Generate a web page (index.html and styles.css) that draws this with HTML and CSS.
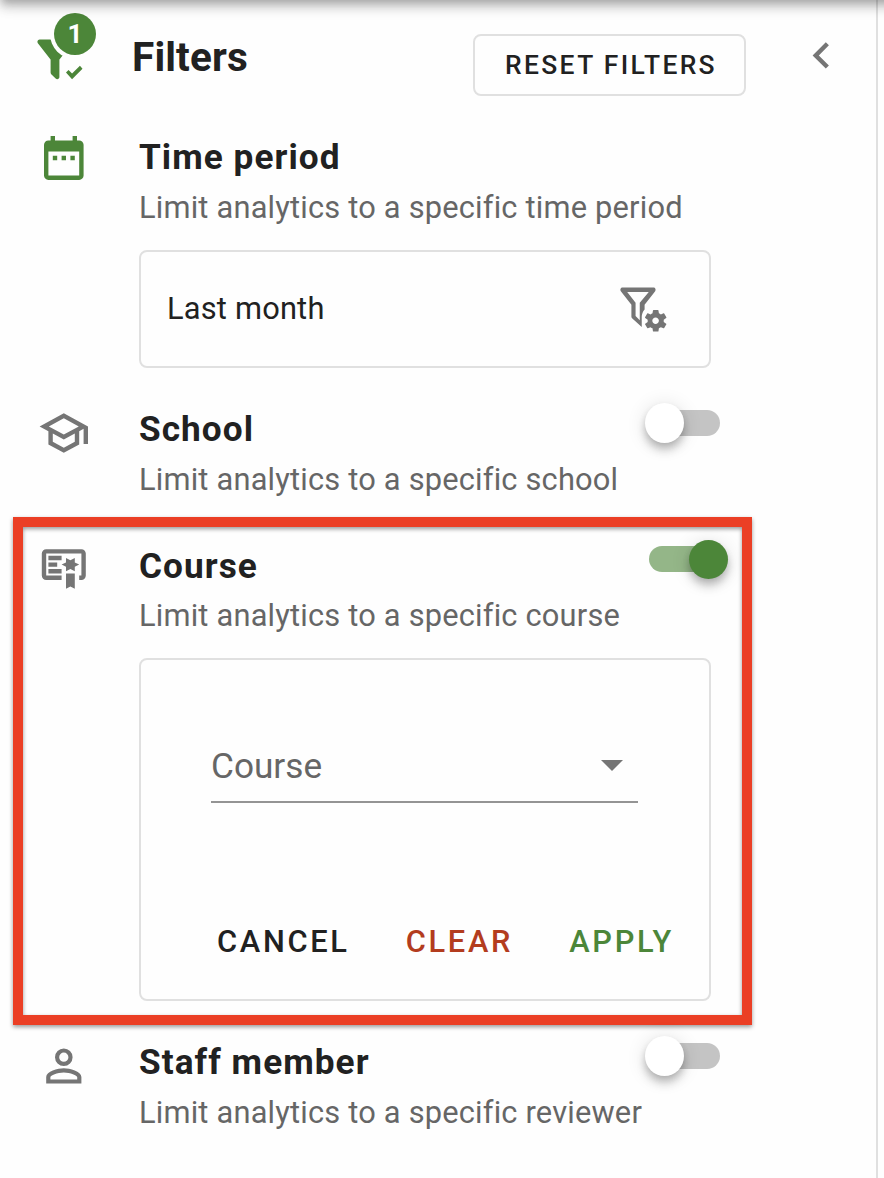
FILE: index.html
```html
<!DOCTYPE html>
<html lang="en">
<head>
  <meta charset="utf-8">
  <title>Filters</title>
  <link rel="stylesheet" href="styles.css">
</head>
<body>
  <div class="toolbar-shadow"></div>
  <div id="panel">
    <div class="header">
      <div class="filter-status">
        <svg class="icon green" viewBox="0 0 24 24"><path d="M12 12V19.88C12.04 20.18 11.94 20.5 11.71 20.71C11.32 21.1 10.69 21.1 10.3 20.71L8.29 18.7C8.06 18.47 7.96 18.16 8 17.87V12H7.97L2.21 4.62C1.87 4.19 1.95 3.56 2.38 3.22C2.57 3.08 2.78 3 3 3H17C17.22 3 17.43 3.08 17.62 3.22C18.05 3.56 18.13 4.19 17.79 4.62L12.03 12H12M17.75 21L15 18L16.16 16.84L17.75 18.43L21.34 14.84L22.5 16.25L17.75 21"/></svg>
        <span class="badge">1</span>
      </div>
      <h1>Filters</h1>
      <button class="reset">RESET FILTERS</button>
      <svg class="icon collapse" viewBox="0 0 24 24"><path d="M15.41 16.58L10.83 12L15.41 7.41L14 6L8 12L14 18L15.41 16.58Z"/></svg>
    </div>

    <div class="filters">
      <div class="filter time">
        <svg class="icon green" viewBox="0 0 24 24"><path d="M9 11H7v2h2v-2zm4 0h-2v2h2v-2zm4 0h-2v2h2v-2zm2-7h-1V2h-2v2H8V2H6v2H5c-1.11 0-1.99.9-1.99 2L3 20c0 1.1.89 2 2 2h14c1.1 0 2-.9 2-2V6c0-1.1-.9-2-2-2zm0 16H5V9h14v11z"/></svg>
        <div class="content">
          <h2>Time period</h2>
          <p>Limit analytics to a specific time period</p>
          <div class="card value">
            <span>Last month</span>
            <svg class="icon" viewBox="0 0 24 24"><path fill-rule="evenodd" d="M3 3H17C17.85 3 18.3 3.95 17.8 4.62L13 10.8V12.9C12.2 13.8 11.7 15 11.7 16.3V20.9L7.3 16.9C7.1 16.7 7 16.5 7 16.2V10.8L2.2 4.62C1.7 3.95 2.15 3 3 3M5.1 5L8.9 9.9V15.9L10.8 17.8V9.9L14.9 5Z"/><path d="M21.7 18.6V17.6L22.8 16.8C22.9 16.7 23 16.6 22.9 16.5L21.9 14.8C21.9 14.7 21.7 14.7 21.6 14.7L20.4 15.2C20.1 15 19.8 14.8 19.5 14.7L19.3 13.4C19.3 13.3 19.2 13.2 19.1 13.2H17.1C16.9 13.2 16.8 13.3 16.8 13.4L16.6 14.7C16.3 14.9 16 15 15.7 15.2L14.5 14.7C14.4 14.7 14.3 14.7 14.2 14.8L13.2 16.5C13.1 16.6 13.2 16.7 13.3 16.8L14.4 17.6V18.6L13.3 19.4C13.2 19.5 13.1 19.6 13.2 19.7L14.2 21.4C14.3 21.5 14.4 21.5 14.5 21.5L15.7 21C16 21.2 16.3 21.4 16.6 21.5L16.8 22.8C16.9 22.9 17 23 17.1 23H19.1C19.2 23 19.3 22.9 19.3 22.8L19.5 21.5C19.8 21.3 20.1 21.2 20.4 21L21.6 21.5C21.7 21.5 21.9 21.5 21.9 21.4L22.9 19.7C23 19.6 22.9 19.5 22.8 19.4L21.7 18.6M18 19.6C17.2 19.6 16.5 18.9 16.5 18.1S17.2 16.6 18 16.6 19.5 17.3 19.5 18.1 18.8 19.6 18 19.6Z"/></svg>
          </div>
        </div>
      </div>

      <div class="filter">
        <svg class="icon" viewBox="0 0 24 24"><path d="M12 3L1 9L5 11.18V17.18L12 21L19 17.18V11.18L21 10.09V17H23V9L12 3M18.82 9L12 12.72L5.18 9L12 5.28L18.82 9M17 16L12 18.72L7 16V12.27L12 15L17 12.27V16Z"/></svg>
        <div class="content">
          <div class="title-row">
            <h2>School</h2>
            <span class="switch"></span>
          </div>
          <p>Limit analytics to a specific school</p>
        </div>
      </div>

      <div class="filter course">
        <svg class="icon" viewBox="0 0 24 24"><path d="M13 21L15 20L17 21V14H13M17 9V7L15 8L13 7V9L11 10L13 11V13L15 12L17 13V11L19 10M20 3H4A2 2 0 0 0 2 5V15A2 2 0 0 0 4 17H11V15H4V5H20V15H19V17H20A2 2 0 0 0 22 15V5A2 2 0 0 0 20 3M11 8H5V6H11M9 11H5V9H9M11 14H5V12H11Z"/></svg>
        <div class="content">
          <div class="title-row">
            <h2>Course</h2>
            <span class="switch on"></span>
          </div>
          <p>Limit analytics to a specific course</p>
          <div class="card form">
            <div class="select">
              <span>Course</span>
              <svg class="caret" viewBox="0 0 22 11"><path d="M0 0H22L11 11Z"/></svg>
            </div>
            <div class="actions">
              <button>CANCEL</button>
              <button class="clear">CLEAR</button>
              <button class="apply">APPLY</button>
            </div>
          </div>
        </div>
        <div class="highlight"></div>
      </div>

      <div class="filter">
        <svg class="icon" viewBox="0 0 24 24"><path d="M12 4A4 4 0 0 1 16 8A4 4 0 0 1 12 12A4 4 0 0 1 8 8A4 4 0 0 1 12 4M12 5.9A2.1 2.1 0 0 0 9.9 8A2.1 2.1 0 0 0 12 10.1A2.1 2.1 0 0 0 14.1 8A2.1 2.1 0 0 0 12 5.9M12 13C14.67 13 20 14.33 20 17V20H4V17C4 14.33 9.33 13 12 13M12 14.9C9.03 14.9 5.9 16.36 5.9 17V18.1H18.1V17C18.1 16.36 14.97 14.9 12 14.9Z"/></svg>
        <div class="content">
          <div class="title-row">
            <h2>Staff member</h2>
            <span class="switch"></span>
          </div>
          <p>Limit analytics to a specific reviewer</p>
        </div>
      </div>
    </div>
  </div>
</body>
</html>
```
FILE: styles.css
```css
* {
  box-sizing: border-box;
}
body {
  margin: 0;
  height: 1178px;
  overflow: hidden;
  position: relative;
  background: #fefefe;
  color: #212121;
  font-family: Roboto, sans-serif;
}
h1, h2, p {
  margin: 0;
}
button {
  padding: 0;
  border: none;
  background: none;
  color: #212121;
  font-family: inherit;
  font-weight: 500;
}

/* shadow of the app toolbar above the panel */
.toolbar-shadow {
  position: absolute;
  z-index: 2;
  top: -60px;
  left: 0;
  right: -40px;
  height: 60px;
  box-shadow: 0 4px 8px -2px rgba(0, 0, 0, .2),
              0 8px 10px rgba(0, 0, 0, .14),
              0 2px 20px rgba(0, 0, 0, .12);
}

#panel {
  width: 878px;
  height: 1178px;
  border-right: 2px solid #e0e0e0;
}

.icon {
  display: block;
  flex: none;
  width: 52.8px;
  height: 52.8px;
  fill: #757575;
}
.icon.green {
  fill: #4c8639;
}

.header {
  display: flex;
  align-items: flex-start;
  height: 131px;
  padding-left: 33px;
}
.filter-status {
  position: relative;
  width: 99px;
  padding-top: 33px;
}
.badge {
  position: absolute;
  top: 13px;
  left: 21px;
  width: 42px;
  height: 42px;
  border-radius: 50%;
  background: #4c8639;
  box-shadow: 0 0 0 4px #fefefe;
  color: #fff;
  font-size: 26.4px;
  font-weight: 700;
  line-height: 42px;
  text-align: center;
}
h1 {
  width: 341px;
  padding-top: 32px;
  font-size: 40.5px;
  font-weight: 700;
  line-height: 50px;
  letter-spacing: .15px;
}
.reset {
  width: 273px;
  height: 62px;
  margin-top: 34px;
  padding-left: 3px;
  border: 2px solid #e0e0e0;
  border-radius: 8px;
  font-size: 26.4px;
  letter-spacing: 2.35px;
}
.collapse {
  margin: 29px 0 0 48.5px;
}

.filters {
  display: flex;
  flex-direction: column;
  gap: 34px;
  padding-left: 37px;
}
.filter {
  position: relative;
  display: flex;
  min-height: 103px;
}
.filter > .icon {
  margin-top: 4px;
  transform: translate(.4px, .6px);
}
.filter.time > .icon {
  margin-top: 0;
}
.filter.course > .icon {
  margin-top: 3px;
}
.content {
  width: 572px;
  margin-left: 49.2px;
}
.title-row {
  display: flex;
  justify-content: space-between;
  margin-bottom: -1px;
}
.course .title-row {
  margin-bottom: -2px;
}
h2 {
  font-size: 35.2px;
  font-weight: 700;
  line-height: 52px;
  letter-spacing: 1.05px;
}
.title-row h2 {
  line-height: 54px;
}
p {
  color: #666;
  font-size: 30.8px;
  line-height: 50px;
  letter-spacing: .2px;
  white-space: nowrap;
}

.card {
  margin-top: 17px;
  border: 2px solid #e0e0e0;
  border-radius: 8px;
}
.value {
  display: flex;
  justify-content: space-between;
  align-items: center;
  height: 118px;
  padding: 0 40px 3px 26px;
  font-size: 30.8px;
  letter-spacing: .2px;
}
.value span {
  padding-top: 2px;
}
.form {
  height: 343px;
  padding: 64px 71px 0 70px;
}
.select {
  display: flex;
  justify-content: space-between;
  align-items: center;
  height: 79px;
  padding: 5px 15px 0 0;
  border-bottom: 2px solid #949494;
  color: #666;
  font-size: 35.2px;
}
.select span {
  padding-top: 1px;
}
.caret {
  width: 22px;
  height: 11px;
  fill: #757575;
}
.actions {
  display: flex;
  gap: 56px;
  margin-top: 112px;
  padding-left: 6px;
}
.actions button {
  font-size: 30.8px;
  line-height: 53px;
  letter-spacing: 2.7px;
}
.actions .clear {
  color: #b33c1e;
}
.actions .apply {
  color: #4c8639;
}

.switch {
  position: relative;
  width: 68px;
  height: 26px;
  margin: 8px -9px 0 0;
  border-radius: 13px;
  background: #c4c4c4;
}
.switch::after {
  content: "";
  position: absolute;
  top: -7px;
  left: -7px;
  width: 39px;
  height: 40px;
  border-radius: 50%;
  background: #fff;
  box-shadow: 0 4px 8px -2px rgba(0, 0, 0, .2),
              0 8px 10px rgba(0, 0, 0, .14),
              0 2px 20px rgba(0, 0, 0, .12);
}
.switch.on {
  margin: 7px -6px 0 0;
  background: #94b688;
}
.switch.on::after {
  top: -6px;
  left: 40px;
  height: 39px;
  background: #4c8639;
}

/* red frame round the course filter */
.highlight {
  position: absolute;
  top: -22px;
  left: -24px;
  width: 739px;
  height: 508px;
  border: 10px solid #eb3f25;
  filter: drop-shadow(0 2px 2px rgba(0, 0, 0, .4));
}
```
